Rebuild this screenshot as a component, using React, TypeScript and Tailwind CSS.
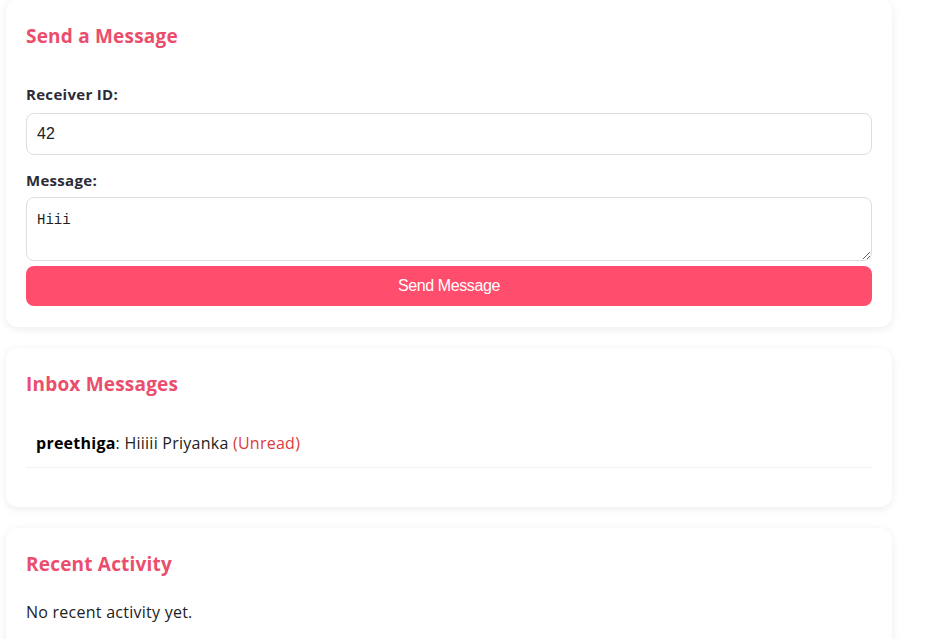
export default function App() {
  return (
    <div className="min-h-screen bg-white px-[6px] font-['Open_Sans',sans-serif] text-[#222]">
      <div className="w-[886px] space-y-[21px] -mt-[1px]">
        <div className="rounded-xl bg-white px-5 pt-[23px] pb-[21px] shadow-[0_2px_8px_rgba(0,0,0,0.08)]">
          <h2 className="text-[19px] font-bold text-[#eb4d6c] leading-7 tracking-[0.2px]">Send a Message</h2>
          <label className="mt-[32px] block text-[15px] font-bold text-[#2b2b36] leading-6 tracking-[0.3px]">Receiver ID:</label>
          <input
            type="text"
            defaultValue="42"
            className="mt-[7px] block w-full h-[42px] rounded-lg border border-[#dedede] px-[10px] text-[16px] font-['Liberation_Sans',sans-serif] outline-none"
          />
          <label className="mt-[13px] block text-[15px] font-bold text-[#2b2b36] leading-6 tracking-[0.3px]">Message:</label>
          <textarea
            defaultValue="Hiii"
            className="mt-[5px] block w-full h-[64px] rounded-lg border border-[#dedede] px-[10px] pt-[12px] pb-[8px] text-[14px] font-['Liberation_Mono',monospace] outline-none"
          />
          <button
            type="button"
            className="mt-[5px] block w-full h-[40px] rounded-lg bg-[#ff4d6d] text-white text-[16px] font-['Liberation_Sans',sans-serif] tracking-[-0.4px]"
          >
            Send Message
          </button>
        </div>

        <div className="rounded-xl bg-white px-5 pt-[22px] pb-[39px] shadow-[0_2px_8px_rgba(0,0,0,0.08)]">
          <h2 className="text-[19px] font-bold text-[#eb4d6c] leading-7 tracking-[0.2px]">Inbox Messages</h2>
          <div className="mt-[33px] border-b border-[#f7eef0] px-[10px] pb-[12px] text-[16px] leading-6 tracking-[0.25px]">
            <span className="font-bold text-black">preethiga</span>: Hiiiii Priyanka{" "}
            <span className="text-[#e03a3a]">(Unread)</span>
          </div>
        </div>

        <div className="rounded-xl bg-white px-5 pt-[22px] pb-[40px] shadow-[0_2px_8px_rgba(0,0,0,0.08)]">
          <h2 className="text-[19px] font-bold text-[#eb4d6c] leading-7 tracking-[0.2px]">Recent Activity</h2>
          <p className="mt-[22px] text-[16px] leading-6 tracking-[0.25px]">No recent activity yet.</p>
        </div>
      </div>
    </div>
  );
}
